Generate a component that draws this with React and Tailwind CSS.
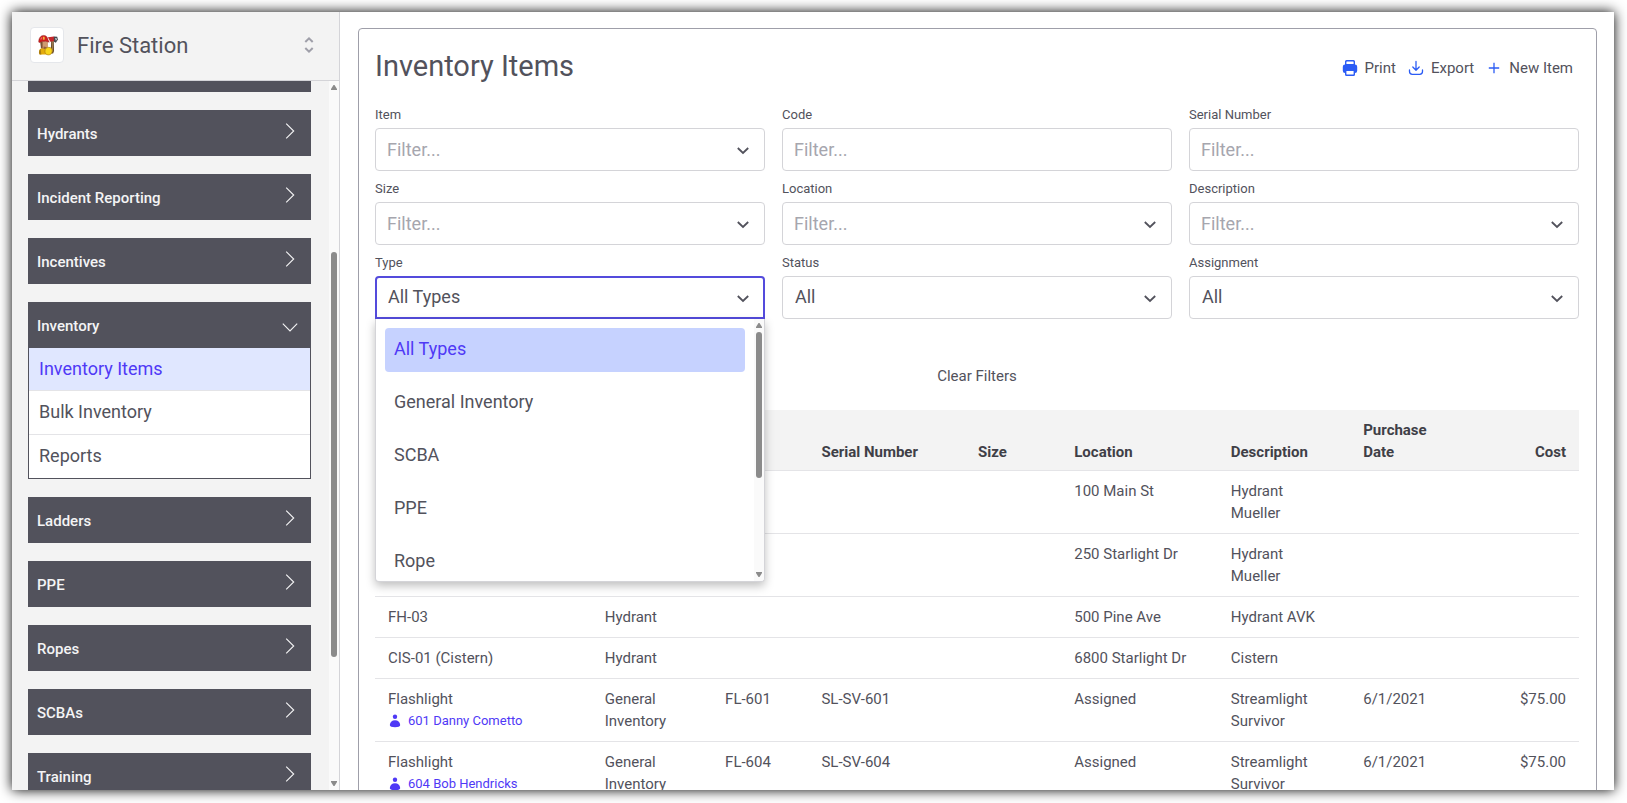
import React, { useState } from 'react';

const sections = [
  { name: 'Hydrants' },
  { name: 'Incident Reporting' },
  { name: 'Incentives' },
  { name: 'Inventory', pages: ['Inventory Items', 'Bulk Inventory', 'Reports'] },
  { name: 'Ladders' },
  { name: 'PPE' },
  { name: 'Ropes' },
  { name: 'SCBAs' },
  { name: 'Training' },
];

const types = ['All Types', 'General Inventory', 'SCBA', 'PPE', 'Rope'];

const items = [
  { location: '100 Main St', description: 'Hydrant Mueller' },
  { location: '250 Starlight Dr', description: 'Hydrant Mueller' },
  { name: 'FH-03', type: 'Hydrant', location: '500 Pine Ave', description: 'Hydrant AVK' },
  { name: 'CIS-01 (Cistern)', type: 'Hydrant', location: '6800 Starlight Dr', description: 'Cistern' },
  {
    name: 'Flashlight',
    person: '601 Danny Cometto',
    type: 'General Inventory',
    code: 'FL-601',
    serial: 'SL-SV-601',
    location: 'Assigned',
    description: 'Streamlight Survivor',
    date: '6/1/2021',
    cost: '$75.00',
  },
  {
    name: 'Flashlight',
    person: '604 Bob Hendricks',
    type: 'General Inventory',
    code: 'FL-604',
    serial: 'SL-SV-604',
    location: 'Assigned',
    description: 'Streamlight Survivor',
    date: '6/1/2021',
    cost: '$75.00',
  },
];

function Firefighter() {
  return (
    <svg viewBox="0 0 34 36" className="h-9 w-[34px] rounded-sm border border-gray-200 bg-white" aria-hidden="true">
      <path d="M21.500 11.500h2.600l.4 13-1 2.500h-2.500z" fill="#6b4e2c" />
      <path d="M22.300 13h.8l.2 12h-1z" fill="#a88352" />
      <path d="M18 9.800l6.500-.8 1.500 4.600-5.500 1z" fill="#c4262a" />
      <path d="M24.200 9l3.600.2.800 3-2.200 3.300-2-1z" fill="#44484e" />
      <path d="M25.500 10.500l1.800.2.300 1.500-1.200 1.200z" fill="#c9ccd0" />
      <path d="M10 14h8v6l-2 3h-4.500z" fill="#cf9a70" />
      <path d="M9.800 14.500h2.500v8.500l-1.800-2z" fill="#7b4f33" />
      <path d="M13.500 19.500l3.500 1-2 2.500-2-.5z" fill="#95603f" />
      <path d="M8.500 26c0-3 1.500-4.600 3.300-4.600l3.700 1.100 1 5.500H9.300c-.6-.5-.8-1.200-.8-2z" fill="#e3ab0c" />
      <path d="M8.500 26c0-2 .6-3.300 1.700-4.100l.8 6.100H9.300c-.6-.5-.8-1.200-.8-2z" fill="#a87a10" />
      <path d="M18.800 20.500c2.600 0 3.900 1.800 3.700 4.100-.2 2.500-1.700 3.900-4 3.900-2.400 0-3.700-1.500-3.700-3.900 0-2.500 1.600-4.100 4-4.100z" fill="#f8d51c" stroke="#a87a10" strokeWidth=".7" />
      <path d="M8.200 14.800c0-3.900 1.900-6.800 4.900-7 3-.1 4.700 1.800 5.100 5l1.200 2.200-3.600-.9-3.600.1-3.600 1.200z" fill="#cf1f1e" stroke="#8c1517" strokeWidth=".5" />
      <path d="M12.700 9.300l1.700-.1.300 3-2.100.1z" fill="#f0b63c" />
      <path d="M9.800 12.300c.4-1.600 1.100-2.500 2.200-3l-.4 2.600z" fill="#f2645a" />
    </svg>
  );
}

function PrintIcon() {
  return (
    <svg viewBox="0 0 16 16" className="size-4 text-[#2b5cf5]" fill="currentColor" aria-hidden="true">
      <path d="M4.500 0h7A1.500 1.500 0 0 1 13 1.500V5H3V1.500A1.500 1.500 0 0 1 4.500 0zm.4 1.400a.5.5 0 0 0-.5.5V4h7.200V1.900a.5.5 0 0 0-.5-.5z" fillRule="evenodd" />
      <path
        d="M3 4.500h10a2.200 2.200 0 0 1 2.200 2.200v4.100A2.200 2.200 0 0 1 13 13v1.500a1.500 1.500 0 0 1-1.500 1.500h-7A1.500 1.500 0 0 1 3 14.500V13a2.200 2.200 0 0 1-2.200-2.200V6.700A2.200 2.200 0 0 1 3 4.500zM4.400 11v3.100a.5.5 0 0 0 .5.500h6.200a.5.500 0 0 0 .5-.5V11z"
        fillRule="evenodd"
      />
    </svg>
  );
}

function ExportIcon() {
  return (
    <svg
      viewBox="0 0 16 16"
      className="size-4 text-[#2b5cf5]"
      fill="none"
      stroke="currentColor"
      strokeWidth="1.300"
      strokeLinecap="round"
      strokeLinejoin="round"
      aria-hidden="true"
    >
      <path d="M8 1.500v8.500M4.800 7L8 10.200 11.200 7" />
      <path d="M1.500 10v1.500a2.800 2.800 0 0 0 2.800 2.800h7.400a2.800 2.800 0 0 0 2.800-2.800V10" />
    </svg>
  );
}

function PlusIcon() {
  return (
    <svg viewBox="0 0 16 16" className="size-4 text-[#2b5cf5]" fill="none" stroke="currentColor" strokeWidth="1.300" aria-hidden="true">
      <path d="M8 2.800v10.400M2.800 8h10.400" />
    </svg>
  );
}

function PersonIcon() {
  return (
    <svg viewBox="0 0 14 14" className="size-[14px]" fill="currentColor" aria-hidden="true">
      <circle cx="7" cy="2.800" r="2.200" />
      <path d="M1.800 11c.3-3 2.300-4.700 5.200-4.700s4.900 1.700 5.200 4.700c0 1.500-2.200 2.200-5.200 2.200S1.800 12.500 1.800 11z" />
    </svg>
  );
}

function NavChevron({ open }) {
  return (
    <svg viewBox="0 0 16 16" className="size-4 overflow-visible" fill="none" stroke="currentColor" strokeWidth="1.100" aria-hidden="true">
      {open ? <path d="M.8 5.700L8 13l7.200-7.300" /> : <path d="M4.200-2.300l7.500 7.300-7.500 7.300" />}
    </svg>
  );
}

function SelectChevron() {
  return (
    <svg
      viewBox="0 0 18 18"
      className="pointer-events-none absolute top-[13px] right-[13px] size-[18px]"
      fill="none"
      stroke="currentColor"
      strokeWidth="1.800"
      aria-hidden="true"
    >
      <path d="M3.800 7L9 12l5.200-5" />
    </svg>
  );
}

function ScrollBar({ children }) {
  return (
    <div className="flex w-[10px] shrink-0 flex-col items-center bg-[#fafafa] text-[#8b8b8b]" aria-hidden="true">
      <svg viewBox="0 0 6 5" className="mt-1 mb-1 h-[5px] w-[6px] shrink-0" fill="currentColor">
        <path d="M2.500 0h1L6 4v1H0V4z" />
      </svg>
      <div className="flex w-full flex-1 flex-col items-center">{children}</div>
      <svg viewBox="0 0 6 5" className="mb-1 h-[5px] w-[6px] shrink-0" fill="currentColor">
        <path d="M2.500 5h1L6 1V0H0v1z" />
      </svg>
    </div>
  );
}

function Sidebar() {
  return (
    <aside className="flex w-[328px] shrink-0 flex-col border-r border-[#d4d4d8] bg-[#f3f3f3]">
      <button className="flex h-[69px] shrink-0 items-center border-b border-[#d4d4d8] pr-6 pb-[2px] pl-[18px]">
        <Firefighter />
        <span className="ml-[13px] flex-1 text-left text-[22px]">Fire Station</span>
        <svg viewBox="0 0 12 18" className="h-[18px] w-3 text-[#9f9fa9]" fill="none" stroke="currentColor" strokeWidth="2" aria-hidden="true">
          <path d="M2.300 6L6 2.300 9.700 6M2.300 12L6 15.700 9.700 12" />
        </svg>
      </button>
      <div className="flex min-h-0 flex-1">
        <nav className="flex flex-1 flex-col gap-[18px] overflow-hidden pr-[18px] pl-4">
          <div className="-mt-[35px] h-[46px] shrink-0 bg-zinc-600" />
          {sections.map((s) => (
            <div key={s.name} className="shrink-0">
              <button
                aria-expanded={!!s.pages}
                className="flex h-[46px] w-full items-center justify-between bg-zinc-600 pt-[2px] pr-[13px] pl-[9px] text-[15px] font-medium text-zinc-100"
              >
                {s.name}
                <NavChevron open={!!s.pages} />
              </button>
              {s.pages && (
                <ul className="divide-y divide-zinc-200 border-x border-b border-zinc-600 bg-white text-[18px]">
                  {s.pages.map((p, i) => (
                    <li key={p}>
                      <a
                        href="#"
                        className={
                          i === 0
                            ? 'flex h-[42px] items-center bg-indigo-100 px-[10px] pb-[2px] text-[#4f39f6]'
                            : 'flex h-[43px] items-center px-[10px] pb-[2px]'
                        }
                      >
                        {p}
                      </a>
                    </li>
                  ))}
                </ul>
              )}
            </div>
          ))}
        </nav>
        <ScrollBar>
          <div className="h-[23%] shrink-0" />
          <div className="h-[59%] w-[6px] rounded-full bg-[#8b8b8b]" />
        </ScrollBar>
      </div>
    </aside>
  );
}

function Field({ id, label, children }) {
  return (
    <div className="flex flex-col gap-[3px]">
      <label htmlFor={id} className="text-[13px] leading-5">
        {label}
      </label>
      <div className="relative">{children}</div>
    </div>
  );
}

function TextFilter({ id, label, combo }) {
  return (
    <Field id={id} label={label}>
      <input
        id={id}
        type="text"
        placeholder="Filter..."
        className="h-[43px] w-full rounded border border-[#d4d4d8] bg-white px-[11px] text-[18px] placeholder:text-[#a6a6ae]"
      />
      {combo && <SelectChevron />}
    </Field>
  );
}

function SelectFilter({ id, label }) {
  return (
    <Field id={id} label={label}>
      <select id={id} className="h-[43px] w-full appearance-none rounded border border-[#d4d4d8] bg-white px-3 pb-[2px] text-[18px]">
        <option>All</option>
      </select>
      <SelectChevron />
    </Field>
  );
}

function TypeFilter() {
  const [type, setType] = useState('All Types');
  return (
    <Field id="type" label="Type">
      <select
        id="type"
        value={type}
        onChange={(e) => setType(e.target.value)}
        className="h-[43px] w-full appearance-none rounded-t border-2 border-[#544bdc] bg-white px-[11px] pb-[2px] text-[18px] outline-none"
      >
        {types.map((t) => (
          <option key={t}>{t}</option>
        ))}
      </select>
      <SelectChevron />
      <div className="absolute top-full right-0 left-0 z-10 flex h-[263px] overflow-hidden rounded-b border-x border-b border-[#d4d4d8] bg-white shadow-[0_4px_10px_rgba(0,0,0,0.25)]">
        <div className="flex flex-1 flex-col gap-[9px] p-[9px]">
          {types.map((t) => (
            <button
              key={t}
              onClick={() => setType(t)}
              className={
                t === type
                  ? 'h-11 shrink-0 rounded bg-indigo-200 px-[9px] pb-1 text-left text-[18px] text-[#4f39f6]'
                  : 'h-11 shrink-0 rounded px-[9px] pb-1 text-left text-[18px]'
              }
            >
              {t}
            </button>
          ))}
        </div>
        <ScrollBar>
          <div className="h-[146px] w-[6px] rounded-full bg-[#8b8b8b]" />
        </ScrollBar>
      </div>
    </Field>
  );
}

function ItemsTable() {
  return (
    <table className="mt-[18px] w-full table-fixed text-left text-[15px] leading-[22px]">
      <colgroup>
        <col className="w-[18%]" />
        <col className="w-[10%]" />
        <col className="w-[8%]" />
        <col className="w-[13%]" />
        <col className="w-[8%]" />
        <col className="w-[13%]" />
        <col className="w-[11%]" />
        <col className="w-[8%]" />
        <col className="w-[11%]" />
      </colgroup>
      <thead className="bg-[#f3f3f3] text-zinc-700">
        <tr className="border-b border-zinc-200 align-bottom *:px-[13px] *:pt-[9px] *:pb-[7px] *:font-bold">
          <th aria-label="Item" />
          <th aria-label="Type" />
          <th aria-label="Code" />
          <th>Serial Number</th>
          <th>Size</th>
          <th>Location</th>
          <th>Description</th>
          <th>Purchase Date</th>
          <th className="text-right">Cost</th>
        </tr>
      </thead>
      <tbody>
        {items.map((item, i) => (
          <tr key={i} className="border-b border-zinc-200 align-top *:px-[13px] *:py-[9px]">
            <td>
              {item.name}
              {item.person && (
                <a href="#" className="flex items-center gap-[6px] text-[13px] leading-[22px] text-[#4f39f6]">
                  <PersonIcon />
                  {item.person}
                </a>
              )}
            </td>
            <td>{item.type}</td>
            <td>{item.code}</td>
            <td>{item.serial}</td>
            <td />
            <td>{item.location}</td>
            <td className="pr-5!">{item.description}</td>
            <td>{item.date}</td>
            <td className="text-right">{item.cost}</td>
          </tr>
        ))}
      </tbody>
    </table>
  );
}

export default function App() {
  return (
    <div className="h-screen bg-white p-3 pr-[13px] pb-[13px] font-['Roboto',sans-serif] text-zinc-600">
      <div className="flex h-full overflow-hidden bg-white shadow-[0_0_12px_#000]">
        <Sidebar />
        <main className="min-w-0 flex-1 pt-4 pr-[17px] pl-[18px]">
          <section className="rounded border border-[#9f9fa9] p-4 pr-[17px]">
            <header className="flex h-11 items-center justify-between">
              <h1 className="text-[29px]">Inventory Items</h1>
              <div className="flex pt-[2px] text-[15px]">
                <button className="flex items-center gap-[7px] px-[6px]">
                  <PrintIcon />
                  Print
                </button>
                <button className="flex items-center gap-[7px] px-[6px]">
                  <ExportIcon />
                  Export
                </button>
                <button className="flex items-center gap-[7px] px-[6px]">
                  <PlusIcon />
                  New Item
                </button>
              </div>
            </header>
            <form className="mt-4 grid grid-cols-3 gap-x-[17px] gap-y-2">
              <TextFilter id="item" label="Item" combo />
              <TextFilter id="code" label="Code" />
              <TextFilter id="serial" label="Serial Number" />
              <TextFilter id="size" label="Size" combo />
              <TextFilter id="location" label="Location" combo />
              <TextFilter id="description" label="Description" combo />
              <TypeFilter />
              <SelectFilter id="status" label="Status" />
              <SelectFilter id="assignment" label="Assignment" />
            </form>
            <div className="mt-[41px] flex justify-center">
              <button className="h-8 px-3 text-[15px]">Clear Filters</button>
            </div>
            <ItemsTable />
          </section>
        </main>
      </div>
    </div>
  );
}
